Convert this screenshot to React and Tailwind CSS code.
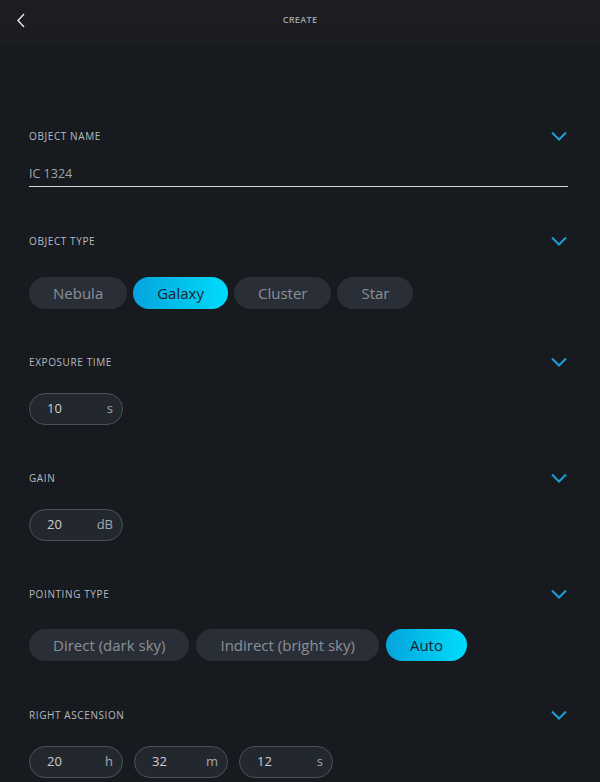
import React from 'react';

const Chevron = () => (
    <svg width="16" height="10" viewBox="0 0 16 10" fill="none">
        <path d="M1 1.5 L8 8.5 L15 1.5" stroke="#1a9fd8" strokeWidth="2" />
    </svg>
);

const Label = ({ children }) => (
    <div className="h-[20px] flex items-center justify-between">
        <span className="text-[10px] font-medium tracking-[0.06em] text-[#b6bbc1] uppercase">{children}</span>
        <span className="mr-[1px]"><Chevron /></span>
    </div>
);

const Choice = ({ label, active }) => (
    <div
        className={
            active
                ? 'h-[32px] px-[24px] rounded-full flex items-center text-[15px] text-[#1a2430] bg-gradient-to-r from-[#06a4dc] to-[#00dcfb]'
                : 'h-[32px] px-[24px] rounded-full flex items-center text-[15px] text-[#8a9099] bg-[#2a2f37]'
        }
    >
        {label}
    </div>
);

const NumField = ({ value, unit }) => (
    <div className="w-[94px] h-[32px] rounded-full border border-[#4a5159] bg-[#23282f] flex items-center justify-between pl-[17px] pr-[9px] text-[13px]">
        <span className="text-[#c9cdd2]">{value}</span>
        <span className="text-[#a3a9b0]">{unit}</span>
    </div>
);

const App = () => {
    return (
        <div className="w-[600px] h-[782px] overflow-hidden bg-[#171a1f] flex flex-col" style={{ fontFamily: '"Open Sans", "Noto Sans", sans-serif' }}>
            {/* header */}
            <div className="h-[44px] shrink-0 bg-gradient-to-b from-[#1c1e21] to-[#1a1c20] flex items-center relative">
                <svg className="absolute left-[16px] top-[13px]" width="10" height="15" viewBox="0 0 10 15" fill="none">
                    <path d="M8 1 L2 7.5 L8 14" stroke="#e6e8ea" strokeWidth="1.4" />
                </svg>
                <div className="flex-1 text-center text-[9px] font-semibold tracking-[0.04em] text-[#9fa5ac] -mt-[5px]">CREATE</div>
            </div>

            <div className="px-[29px] pr-[32px] pt-[82px] flex flex-col">
                {/* object name */}
                <Label>Object name</Label>
                <div className="mt-[17px] h-[24px] border-b border-[#d2d5d9] flex items-center text-[12.5px] text-[#a3a7ab]">IC 1324</div>

                {/* object type */}
                <div className="mt-[44px]">
                    <Label>Object type</Label>
                    <div className="mt-[26px] flex gap-[6px]">
                        <Choice label="Nebula" />
                        <Choice label="Galaxy" active />
                        <Choice label="Cluster" />
                        <Choice label="Star" />
                    </div>
                </div>

                {/* exposure */}
                <div className="mt-[43px]">
                    <Label>Exposure time</Label>
                    <div className="mt-[21px] flex">
                        <NumField value="10" unit="s" />
                    </div>
                </div>

                {/* gain */}
                <div className="mt-[43px]">
                    <Label>Gain</Label>
                    <div className="mt-[21px] flex">
                        <NumField value="20" unit="dB" />
                    </div>
                </div>

                {/* pointing */}
                <div className="mt-[43px]">
                    <Label>Pointing type</Label>
                    <div className="mt-[25px] flex gap-[7px]">
                        <Choice label="Direct (dark sky)" />
                        <Choice label="Indirect (bright sky)" />
                        <Choice label="Auto" active />
                    </div>
                </div>

                {/* right ascension */}
                <div className="mt-[44px]">
                    <Label>Right ascension</Label>
                    <div className="mt-[21px] flex gap-[11px]">
                        <NumField value="20" unit="h" />
                        <NumField value="32" unit="m" />
                        <NumField value="12" unit="s" />
                    </div>
                </div>
            </div>
        </div>
    );
};

export default App;
